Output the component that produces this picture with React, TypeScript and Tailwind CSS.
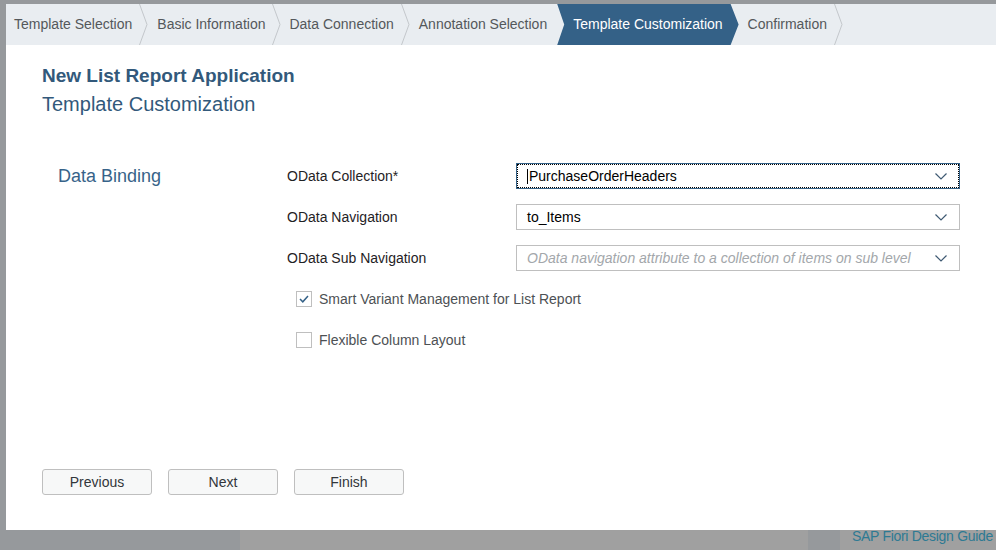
const font = { fontFamily: '"Liberation Sans", Arial, sans-serif' };

const Sep = () => (
  <svg width="9" height="41" viewBox="0 0 9 41" className="shrink-0">
    <polyline points="0.5,0 8,20.5 0.5,41" fill="none" stroke="#c3c7cb" strokeWidth="1" />
  </svg>
);

const Chevron = () => (
  <svg width="12" height="7" viewBox="0 0 12 7" className="shrink-0">
    <polyline points="0.5,0.5 6,6 11.5,0.5" fill="none" stroke="#3f5a73" strokeWidth="1.2" />
  </svg>
);

const Checkbox = ({ checked, label }: { checked?: boolean; label: string }) => (
  <div className="flex items-center h-[26px] pl-[9px] mb-[15px]">
    <div className="w-[16px] h-[16px] border border-[#bfbfbf] bg-white flex items-center justify-center">
      {checked && (
        <svg width="10" height="8" viewBox="0 0 10 8">
          <polyline points="1,4 3.8,6.8 9,1" fill="none" stroke="#346187" strokeWidth="1.5" />
        </svg>
      )}
    </div>
    <span className="ml-[7px] text-[14px] text-[#4d5154]">{label}</span>
  </div>
);

const App = () => (
  <div className="w-[996px] h-[550px] bg-[#96999c] flex flex-col overflow-hidden" style={font}>
    <div className="h-[530px] pt-[4px] pl-[6px] flex">
      <div className="flex-1 bg-white flex flex-col">
        {/* wizard steps */}
        <div className="h-[41px] bg-[#e9edf1] flex items-stretch text-[14px] text-[#54585b]">
          <div className="flex items-center pl-[8px] pr-[7px]">Template Selection</div>
          <Sep />
          <div className="flex items-center pl-[9px] pr-[7px]">Basic Information</div>
          <Sep />
          <div className="flex items-center pl-[8px] pr-[7px]">Data Connection</div>
          <Sep />
          <div className="flex items-center pl-[9px] pr-[10px]">Annotation Selection</div>
          <div className="flex items-center pl-[16px] pr-[16px] bg-[#346187] text-white [clip-path:polygon(0_0,calc(100%-8px)_0,100%_50%,calc(100%-8px)_100%,0_100%,7px_50%)]">
            Template Customization
          </div>
          <div className="flex items-center pl-[9px] pr-[7px]">Confirmation</div>
          <Sep />
        </div>

        {/* heading */}
        <div className="pl-[36px] mt-[17px] leading-[28px] text-[#32597b]">
          <div className="font-bold text-[19px]">New List Report Application</div>
          <div className="text-[20px]">Template Customization</div>
        </div>

        {/* form */}
        <div className="flex mt-[45px]">
          <div className="w-[281px] pl-[52px] text-[18px] leading-[26px] text-[#376389]">Data Binding</div>
          <div className="flex flex-col">
            <div className="flex items-center h-[26px] mb-[15px]">
              <div className="w-[229px] text-[14px] text-[#1f2225]">OData Collection*</div>
              <div className="w-[444px] h-[26px] border border-[#346187] outline outline-1 outline-dotted outline-black -outline-offset-2 flex items-center pl-[10px] pr-[12px]">
                <span className="w-px h-[15px] bg-black mr-[1px]" />
                <span className="flex-1 text-[14px] text-black">PurchaseOrderHeaders</span>
                <Chevron />
              </div>
            </div>
            <div className="flex items-center h-[26px] mb-[15px]">
              <div className="w-[229px] text-[14px] text-[#1f2225]">OData Navigation</div>
              <div className="w-[444px] h-[26px] border border-[#bfbfbf] flex items-center pl-[10px] pr-[12px]">
                <span className="flex-1 text-[14px] text-black">to_Items</span>
                <Chevron />
              </div>
            </div>
            <div className="flex items-center h-[26px] mb-[15px]">
              <div className="w-[229px] text-[14px] text-[#1f2225]">OData Sub Navigation</div>
              <div className="w-[444px] h-[26px] border border-[#bfbfbf] flex items-center pl-[10px] pr-[12px]">
                <span className="flex-1 text-[14px] italic text-[#a3a7ab]">
                  OData navigation attribute to a collection of items on sub level
                </span>
                <Chevron />
              </div>
            </div>
            <Checkbox checked label="Smart Variant Management for List Report" />
            <Checkbox label="Flexible Column Layout" />
          </div>
        </div>

        {/* buttons */}
        <div className="mt-auto mb-[35px] pl-[36px] flex gap-[16px]">
          {['Previous', 'Next', 'Finish'].map((b) => (
            <button
              key={b}
              className="w-[110px] h-[26px] bg-[#f7f8f8] border border-[#bfbfbf] rounded-[3px] text-[14px] text-[#32363a]"
            >
              {b}
            </button>
          ))}
        </div>
      </div>
    </div>

    {/* background page peeking below */}
    <div className="h-[20px] flex overflow-hidden">
      <div className="w-[240px] bg-[#96999c]" />
      <div className="w-[568px] bg-[#a0a0a0]" />
      <div className="w-[32px] bg-[#96999c]" />
      <div className="flex-1 bg-[#a0a0a0] pl-[12px]">
        <div className="-mt-[1px] text-[14px] leading-[14px] tracking-[-0.3px] text-[#2e7a93] whitespace-nowrap">
          SAP Fiori Design Guide
        </div>
      </div>
    </div>
  </div>
);

export default App;
